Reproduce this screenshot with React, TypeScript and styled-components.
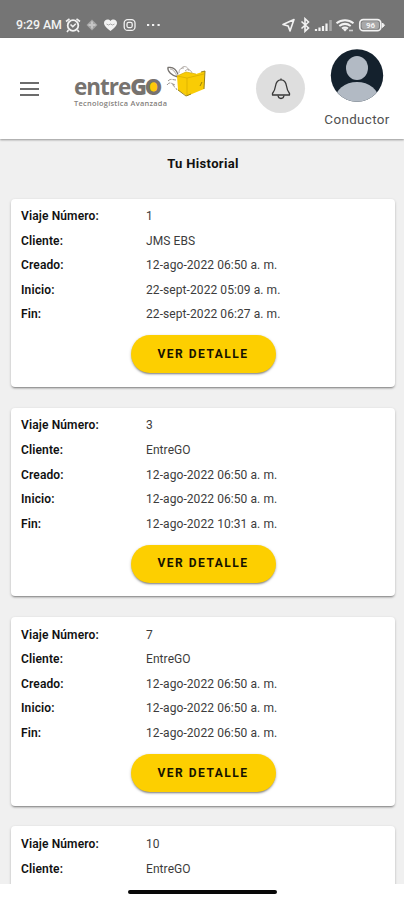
import React from "react";
import styled, { createGlobalStyle } from "styled-components";

const GlobalStyle = createGlobalStyle`
  * { box-sizing: border-box; }
  body { margin: 0; background: #fff; font-family: Roboto, sans-serif; }
`;

const Screen = styled.div`
  width: 404px;
  height: 900px;
  display: flex;
  flex-direction: column;
  overflow: hidden;
  background: #fff;
`;

const StatusBar = styled.div`
  height: 38px;
  flex: none;
  display: flex;
  align-items: center;
  justify-content: space-between;
  padding: 11px 17px 0 16px;
  background: #757575;
  color: #f2f2f2;
`;

const StatusGroup = styled.div`
  display: flex;
  align-items: center;
  svg { display: block; }
`;

const Clock = styled.span`
  width: 47px;
  font-size: 12.4px;
  font-weight: 500;
  line-height: 14px;
  white-space: nowrap;
  letter-spacing: -0.1px;
`;

const Header = styled.header`
  height: 101px;
  flex: none;
  display: flex;
  align-items: flex-start;
  background: #fff;
  z-index: 1;
  box-shadow: 0 1px 2px rgba(0, 0, 0, 0.38);
`;

const MenuButton = styled.button`
  width: 19px;
  height: 14px;
  margin: 43.5px 0 0 20px;
  padding: 0;
  border: 0;
  background: none;
  display: flex;
  flex-direction: column;
  justify-content: space-between;
`;

const MenuLine = styled.span`
  height: 2px;
  background: #6c6c6c;
`;

const Logo = styled.div`
  display: grid;
  grid-template-columns: 91px 42px;
  grid-template-rows: 33px 10px;
  width: 133px;
  margin: 27px 0 0 35px;
`;

const Brand = styled.div`
  display: flex;
  align-items: center;
  align-self: end;
  height: 22px;
  font: 700 22.5px/22px "Open Sans", sans-serif;
  letter-spacing: -1px;
  color: #77736f;
  white-space: nowrap;
`;

const BrandG = styled.span`
  font-weight: 800;
  letter-spacing: -2px;
`;

const BrandO = styled.span`
  font: 800 22px/22px Inter, sans-serif;
  letter-spacing: 0;
  background: radial-gradient(circle at 50% 52%, #fdc90a 6px, transparent 6.5px);
`;

const Tagline = styled.div`
  grid-column: 1 / -1;
  font: 600 7.4px/10px "Open Sans", sans-serif;
  letter-spacing: 0.27px;
  color: #85817d;
  white-space: nowrap;
`;

const BoxArt = styled.svg`
  display: block;
`;

const Bell = styled.button`
  width: 49px;
  height: 49px;
  margin: 26px 0 0 49px;
  padding: 0;
  border: 0;
  border-radius: 50%;
  background: #dedede;
  display: grid;
  place-items: center;
`;

const Profile = styled.div`
  width: 70px;
  margin: 11px 0 0 17px;
  display: flex;
  flex-direction: column;
  align-items: center;
`;

const UserName = styled.div`
  margin-top: 9px;
  font-size: 13.4px;
  line-height: 18px;
  letter-spacing: 0.35px;
  color: #505050;
`;

const Content = styled.main`
  height: 745px;
  flex: none;
  overflow: hidden;
  background: #f0f0f0;
  padding: 0 9px 0 11px;
`;

const Title = styled.h1`
  margin: 0;
  padding-top: 16px;
  height: 59.5px;
  font-size: 13px;
  line-height: 18px;
  font-weight: 700;
  letter-spacing: 0.34px;
  text-align: center;
  color: #111;
`;

const Card = styled.section`
  height: 188.5px;
  margin-bottom: 20.8px;
  padding: 5.6px 10px;
  border-radius: 4px;
  background: #fff;
  box-shadow: 0 2px 2px -1px rgba(0, 0, 0, 0.36), 0 1px 3px rgba(0, 0, 0, 0.2);
`;

const Row = styled.div`
  display: grid;
  grid-template-columns: 125px 1fr;
  height: 24.6px;
  font-size: 12px;
  line-height: 24.6px;
  color: #111;
`;

const Label = styled.span`
  font-weight: 600;
  letter-spacing: 0.13px;
`;

const Value = styled.span`
  color: #3c3c3c;
  letter-spacing: 0.08px;
`;

const DetailButton = styled.button`
  display: block;
  width: 145px;
  height: 38px;
  margin: 8.4px auto 0;
  padding: 0 0 1px;
  border: 0;
  border-radius: 19px;
  background: #fdcf00;
  box-shadow: 0 2px 2px -1px rgba(0, 0, 0, 0.35), 0 1px 3px rgba(0, 0, 0, 0.25);
  font: 700 12px Roboto, sans-serif;
  letter-spacing: 1.5px;
  color: #171300;
`;

const GestureArea = styled.footer`
  height: 16px;
  flex: none;
  padding: 6px 0 0 128px;
  background: #fff;
`;

const GestureBar = styled.div`
  width: 149px;
  height: 4px;
  border-radius: 2px;
  background: #080808;
`;

const BatteryText = styled.text`
  font: 700 8px Roboto, sans-serif;
  fill: #f2f2f2;
`;

type Trip = { id: string; client: string; dates?: [string, string][] };

const trips: Trip[] = [
  { id: "1", client: "JMS EBS", dates: [["Creado:", "12-ago-2022 06:50 a. m."], ["Inicio:", "22-sept-2022 05:09 a. m."], ["Fin:", "22-sept-2022 06:27 a. m."]] },
  { id: "3", client: "EntreGO", dates: [["Creado:", "12-ago-2022 06:50 a. m."], ["Inicio:", "12-ago-2022 06:50 a. m."], ["Fin:", "12-ago-2022 10:31 a. m."]] },
  { id: "7", client: "EntreGO", dates: [["Creado:", "12-ago-2022 06:50 a. m."], ["Inicio:", "12-ago-2022 06:50 a. m."], ["Fin:", "12-ago-2022 06:50 a. m."]] },
  { id: "10", client: "EntreGO" },
];

function LeftIcons() {
  return (
    <svg width="98" height="16" viewBox="0 0 98 16" fill="none" stroke="#f2f2f2">
      <circle cx="10" cy="8.500" r="5.300" strokeWidth="1.800" />
      <path d="M3 4.500 6.500 1.800M13.500 1.800 17 4.500M5.500 13 4 15M14.500 13l1.500 2M7.500 7.500l2.300 2.200 3-3" strokeWidth="1.600" />
      <path d="m29 2.500 5.500 5.500-5.500 5.500L23.500 8z" fill="#a5a5a5" stroke="none" />
      <path d="M29 4.500v7M25.500 8h7" stroke="#c5c5c5" strokeWidth="2" />
      <path d="M47.500 14C44 11 41 9 41 6c0-3.500 4.500-4.500 6.500-2 2-2.500 6.500-1.500 6.500 2 0 3-3 5-6.500 8z" fill="#f2f2f2" stroke="none" />
      <path d="m43.500 7 2 1 2-1 2 1 2-1" stroke="#aaa" />
      <rect x="61.200" y="2.600" width="10.800" height="10.800" rx="3.500" strokeWidth="1.300" />
      <rect x="64" y="5.400" width="5.200" height="5.200" rx="1.500" strokeWidth="1.300" />
      <path d="M84 8h2.200M89 8h2.200M94.500 8h2.200" strokeWidth="2" />
    </svg>
  );
}

function RightIcons() {
  return (
    <svg width="106" height="16" viewBox="0 0 106 16" fill="none" stroke="#f2f2f2">
      <path d="M2 7.500 13 2.500 9 14 7.200 9z" strokeWidth="1.600" strokeLinejoin="round" />
      <path d="m20.500 4.500 7 6.500-3.500 3.300V1.700L27.500 5l-7 6.500" strokeWidth="1.600" />
      <path d="M35 14v-2M38.500 14v-3.500M42 14V9M45.500 14V6.500" strokeWidth="2.200" />
      <path d="M49.500 14V3" stroke="#a5a5a5" strokeWidth="2.600" />
      <path d="M55.500 6.200c5-4 12-4 17 0M58.300 9c3.600-2.700 7.800-2.700 11.400 0M61 11.500c1.900-1.300 4.100-1.300 6 0" strokeWidth="2" />
      <path d="m62 12.500 2-1.500 2 1.500-2 2z" fill="#f2f2f2" stroke="none" />
      <path d="M68 13.500h4" stroke="#cfcfcf" strokeWidth="1.600" />
      <rect x="78.800" y="2.700" width="21" height="11" rx="3.500" strokeWidth="1.700" />
      <rect x="80.500" y="4.300" width="17.500" height="7.800" rx="2" fill="#a8a8a8" stroke="none" />
      <path d="M101.500 6v4.500L103.500 8.200z" fill="#f2f2f2" />
      <BatteryText x="85" y="11" stroke="none">96</BatteryText>
    </svg>
  );
}

function BoxLogo() {
  return (
    <BoxArt width="42" height="34" viewBox="0 0 42 34" fill="none">
      <path d="M13 12C7 11 2 6 3 2.500c5-1 8 1 10 7" stroke="#77736f" strokeWidth="1.300" />
      <path d="M5 4c3 0 5 3 7 7M14 8c0-4 2-5 5-5M16 4c2-4 7-3 8 2M20 6c3-3 6-1 7 2" stroke="#aaa49e" strokeWidth=".9" />
      <path d="m12 11 9-4 10 2 9-3-1 18-17 7-9-6z" fill="#f9cc05" />
      <path d="M12 11 22 13v17M22 13l17-4M12 11l9-4 10 2" stroke="#d5ab00" strokeWidth=".7" />
      <path d="m36 7 4-1-1 18M35 21l2-4M13 25l8 6 5-2" stroke="#8e770b" strokeWidth=".9" />
      <path d="M3 16c3-3 5-1 8-1M2 20c3-4 5-1 8 0M8 19c0 3 3 3 4 6" stroke="#97918c" strokeWidth="1" strokeDasharray="4 1" />
    </BoxArt>
  );
}

export default function App() {
  return (
    <>
      <GlobalStyle />
      <Screen>
        <StatusBar>
          <StatusGroup><Clock>9:29 AM</Clock><LeftIcons /></StatusGroup>
          <StatusGroup><RightIcons /></StatusGroup>
        </StatusBar>
        <Header>
          <MenuButton aria-label="Menú"><MenuLine /><MenuLine /><MenuLine /></MenuButton>
          <Logo>
            <Brand>entre<BrandG>G</BrandG><BrandO>O</BrandO></Brand>
            <BoxLogo />
            <Tagline>Tecnologística Avanzada</Tagline>
          </Logo>
          <Bell aria-label="Notificaciones">
            <svg width="20" height="23" viewBox="0 0 20 23" fill="none" stroke="#383838" strokeWidth="1.300" strokeLinejoin="round">
              <path d="M10 1.500v1.300C6.500 2.800 5 5.500 4.500 9 4 13 3 14.500 1.500 16.500V18h17v-1.500C17 14.500 16 13 15.500 9 15 5.500 13.500 2.800 10 2.800" />
              <path d="M7 18.500c.5 4 5.500 4 6 0" />
            </svg>
          </Bell>
          <Profile>
            <svg width="54" height="53" viewBox="0 0 54 53">
              <defs><clipPath id="avatar"><circle cx="27" cy="26.500" r="26.200" /></clipPath></defs>
              <g clipPath="url(#avatar)">
                <rect width="54" height="53" fill="#14212d" />
                <ellipse cx="27" cy="19" rx="11" ry="12" fill="#b2bac4" />
                <ellipse cx="27" cy="51" rx="22" ry="18" fill="#b2bac4" />
              </g>
            </svg>
            <UserName>Conductor</UserName>
          </Profile>
        </Header>
        <Content>
          <Title>Tu Historial</Title>
          {trips.map((trip) => (
            <Card key={trip.id}>
              <Row><Label>Viaje Número:</Label><Value>{trip.id}</Value></Row>
              <Row><Label>Cliente:</Label><Value>{trip.client}</Value></Row>
              {trip.dates?.map(([label, value]) => (
                <Row key={label}><Label>{label}</Label><Value>{value}</Value></Row>
              ))}
              {trip.dates && <DetailButton>VER DETALLE</DetailButton>}
            </Card>
          ))}
        </Content>
        <GestureArea><GestureBar /></GestureArea>
      </Screen>
    </>
  );
}
